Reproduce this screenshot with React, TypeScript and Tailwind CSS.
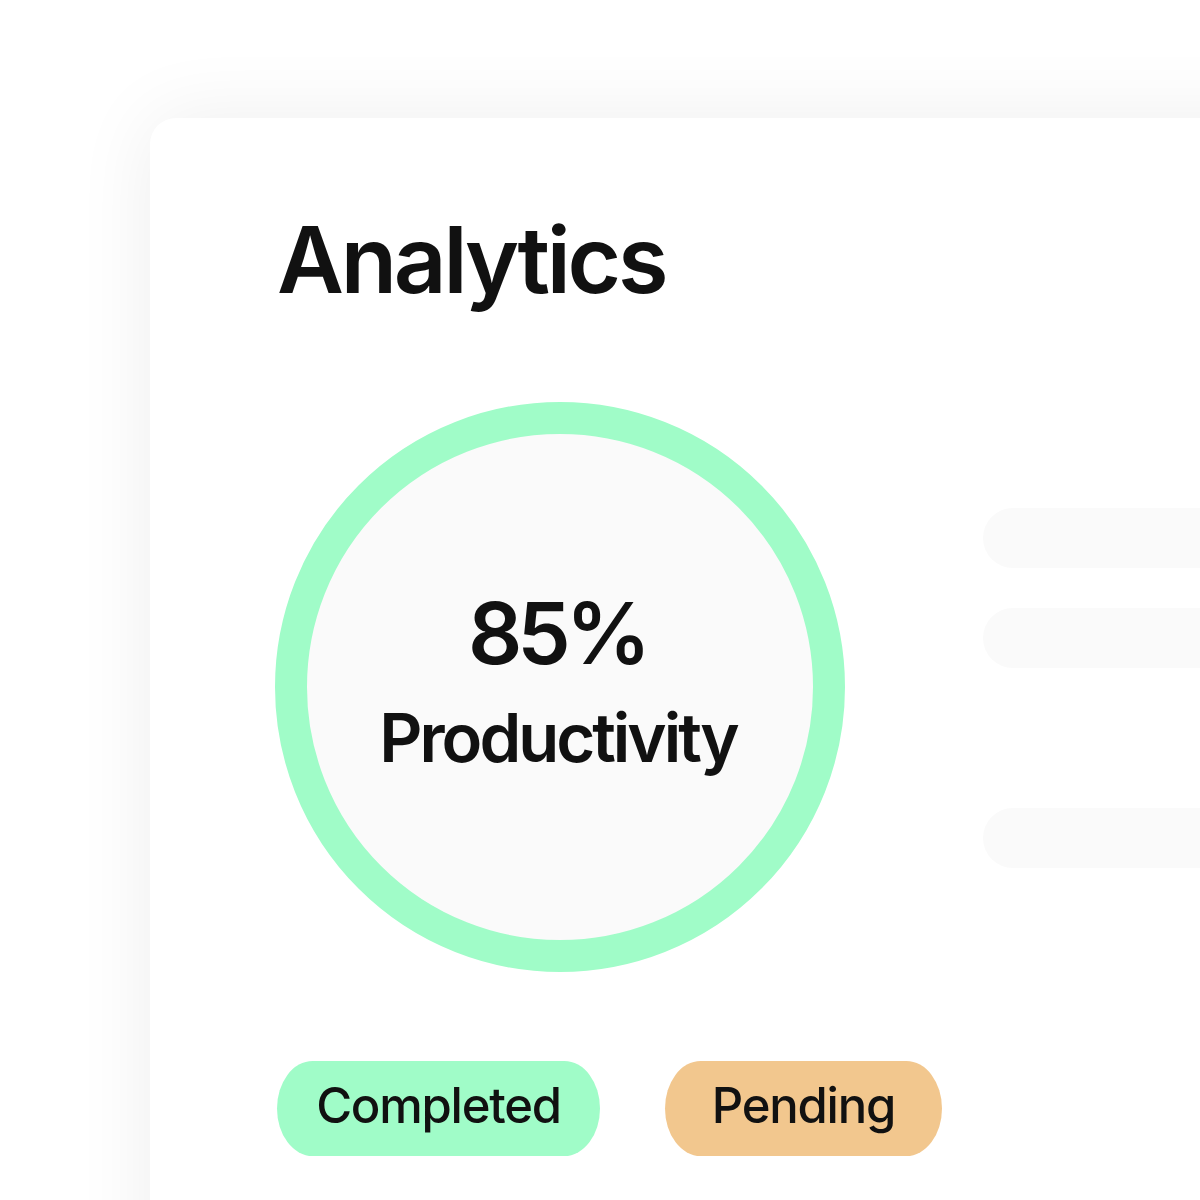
import React from 'react';

const font = { fontFamily: 'Inter, "Noto Sans", sans-serif' };

const App: React.FC = () => {
  const bars = ['bg-[#fafafa]', 'bg-[#fafafa]', 'bg-transparent', 'bg-[#fafafa]'];

  return (
    <div className="w-[1200px] h-[1200px] overflow-hidden bg-white pt-[118px] pl-[150px]" style={font}>
      <div className="w-[1200px] h-[1200px] rounded-[26px] bg-white shadow-[0_0_80px_rgba(0,0,0,0.07)] pl-[127px] pt-[96px]">
        <h1 className="text-[92px] leading-none font-semibold tracking-[-0.035em] text-[#111111]">Analytics</h1>

        <div className="flex mt-[96px]">
          <div className="w-[570px] h-[570px] shrink-0 -ml-[2px] rounded-full border-[32px] border-[#a0fcc8] bg-[#fafafa] flex flex-col items-center justify-center text-[#111111]">
            <div className="text-[85px] leading-none font-semibold tracking-[-0.06em] mt-[-12px] -ml-[6px]">85%</div>
            <div className="text-[67px] leading-none font-semibold tracking-[-0.045em] mt-[28px] -ml-[4px]">Productivity</div>
          </div>

          <div className="flex flex-col gap-[40px] ml-[138px] mt-[106px] w-[400px] shrink-0">
            {bars.map((b, i) => (
              <div key={i} className={`h-[60px] rounded-full ${b}`} />
            ))}
          </div>
        </div>

        <div className="flex gap-[65px] mt-[89px]">
          <span className="h-[95px] w-[323px] pb-[5px] rounded-[36px/48px] bg-[#a0fcc8] flex items-center justify-center text-[49px] font-medium tracking-[-0.025em] text-[#111111]">
            Completed
          </span>
          <span className="h-[95px] w-[277px] pb-[5px] rounded-[36px/48px] bg-[#f2c78e] flex items-center justify-center text-[49px] font-medium tracking-[-0.025em] text-[#111111]">
            Pending
          </span>
        </div>
      </div>
    </div>
  );
};

export default App;
